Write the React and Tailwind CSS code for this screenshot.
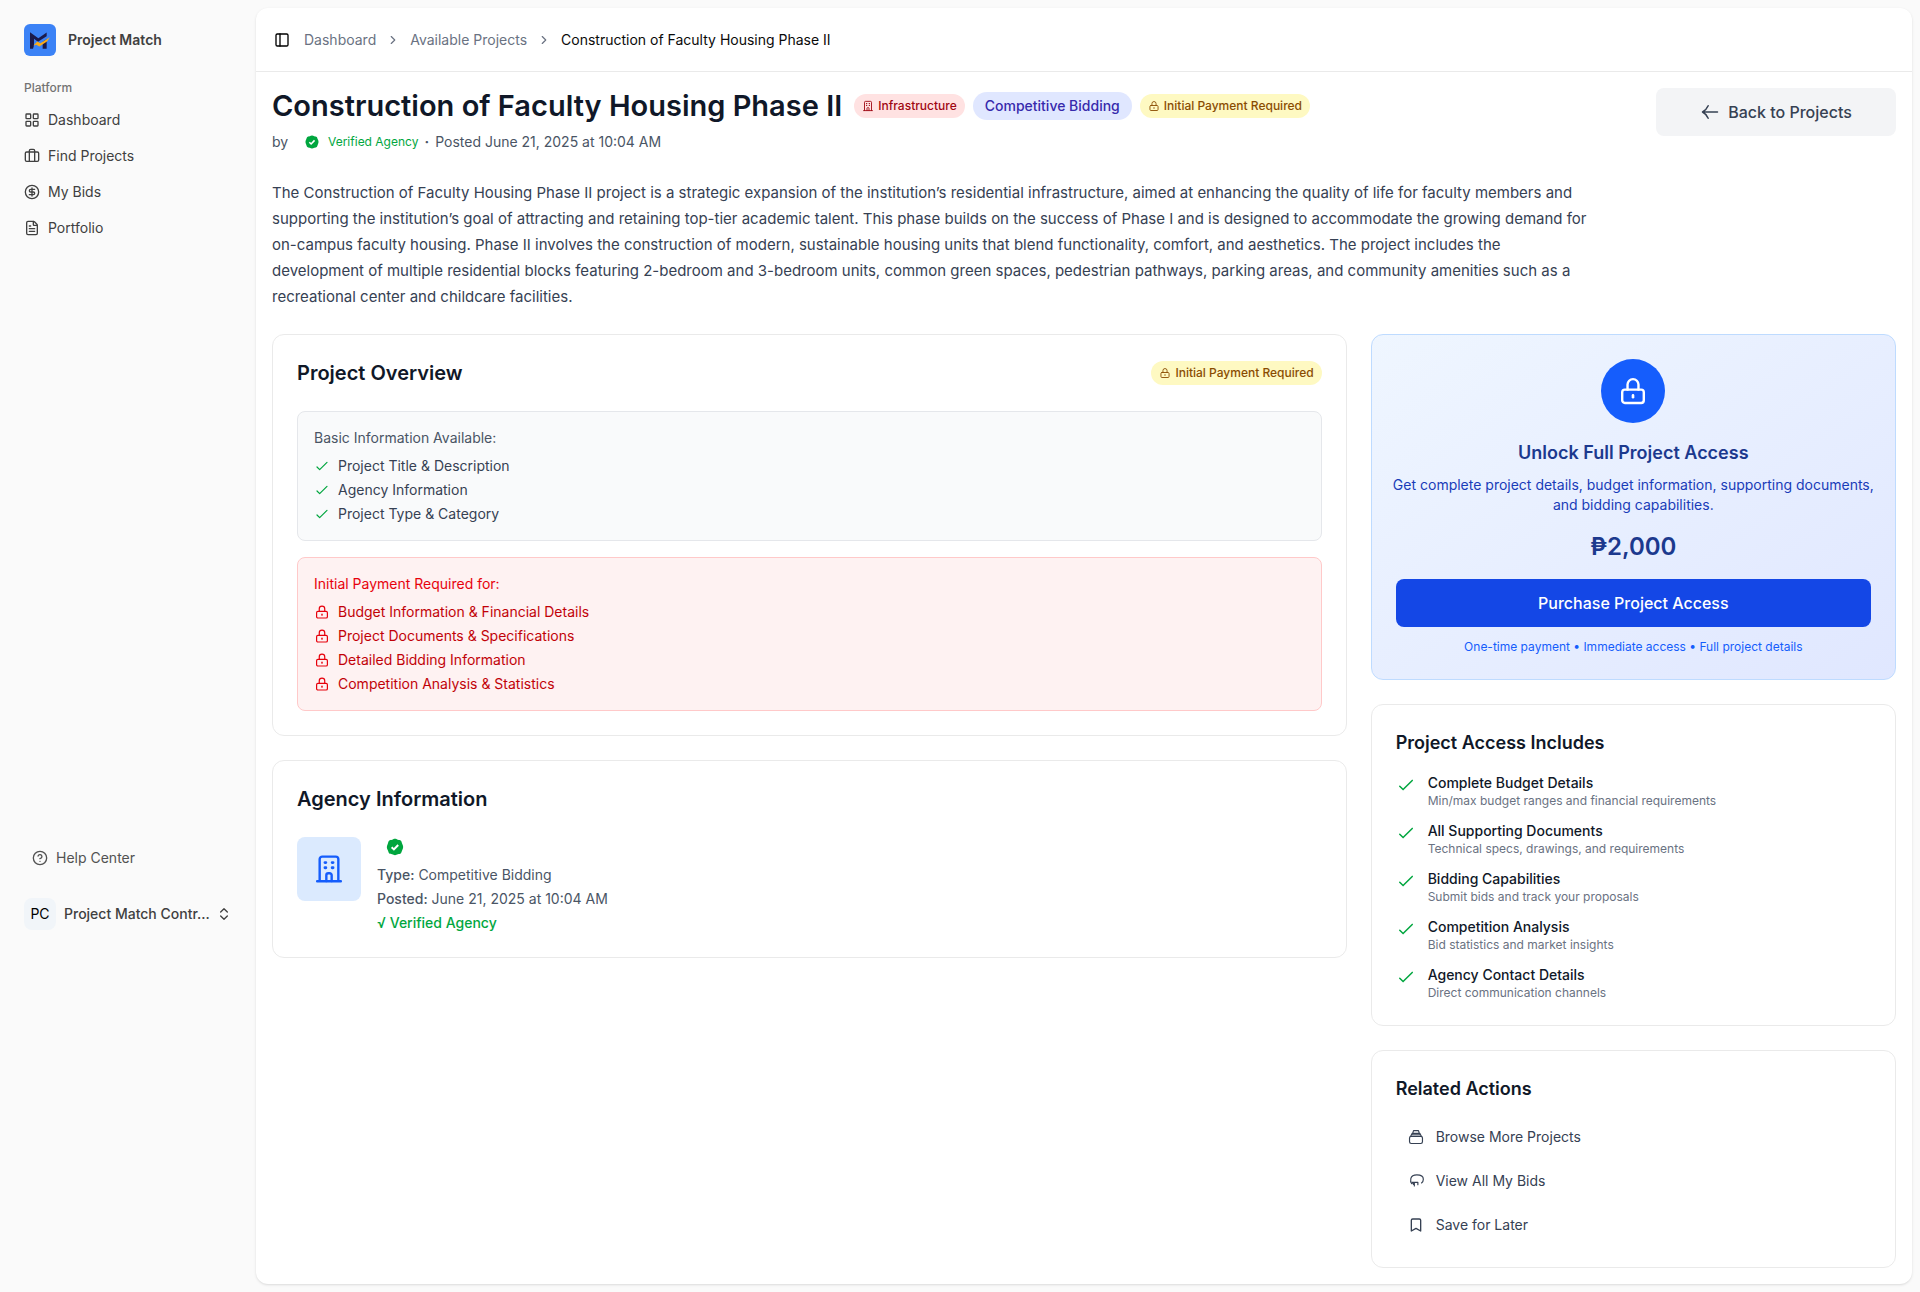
import React from "react";
import {
  LayoutGrid, Briefcase, CircleDollarSign, FileText, CircleHelp, ChevronsUpDown,
  PanelLeft, ChevronRight, Bookmark,
} from "lucide-react";

function Svg({ className, children, strokeWidth = 1.8 }) {
  return (
    <svg viewBox="0 0 24 24" fill="none" stroke="currentColor" strokeWidth={strokeWidth}
      strokeLinecap="round" strokeLinejoin="round" aria-hidden="true" className={className}>
      {children}
    </svg>
  );
}

const Lock = ({ className }) => (
  <Svg className={className}>
    <rect x="3.9" y="11" width="16.2" height="10" rx="2" />
    <path d="M7.9 11V7.2a4.1 4.1 0 0 1 8.2 0V11" />
    <path d="M12 15.300v1.400" strokeWidth="2" />
  </Svg>
);

const Building = ({ className }) => (
  <Svg className={className}>
    <path d="M3.100 21.200h17.800M5 21V4.700a2 2 0 0 1 2-2h10a2 2 0 0 1 2 2V21" />
    <path d="M10 21v-4.300a1.500 1.500 0 0 1 1.500-1.500h1a1.500 1.500 0 0 1 1.500 1.500V21" />
    <path d="M9 7.200h.6M14.400 7.200h.6M9 11h.6M14.400 11h.6" strokeWidth="2.200" />
  </Svg>
);

const Check = ({ className }) => (
  <Svg className={className}><path d="m4.500 13.500 4 4L19.500 6.500" /></Svg>
);

const Verified = ({ className }) => (
  <svg viewBox="-1 -1 22 22" aria-hidden="true" className={className}>
    <path fill="currentColor" d="M10 1c1.200 0 2 .7 3.200 1s2.500.3 3.300 1.100.8 2 1.400 3.200S19 8.800 19 10s-.6 2.400-1.100 3.700-.6 2.400-1.400 3.200-2.100.8-3.300 1.100-2 1-3.200 1-2-.7-3.200-1-2.500-.3-3.300-1.100-.8-2-1.400-3.200S1 11.200 1 10s.6-2.400 1.100-3.700.6-2.400 1.400-3.200 2.100-.8 3.300-1.100S8.800 1 10 1Z" />
    <path d="m6.300 10.300 2.500 2.400 4.700-4.900" fill="none" stroke="#fff" strokeWidth="2.200" />
  </svg>
);

const ArrowLeft = ({ className }) => (
  <Svg className={className}>
    <path d="M21 12H3.200M9.800 4.500C8.500 7.500 6 10.500 3 12c3 1.500 5.500 4.500 6.800 7.500" />
  </Svg>
);

const Stack = ({ className }) => (
  <Svg className={className} strokeWidth={1.75}>
    <rect x="2.300" y="11" width="19.400" height="10.800" rx="2.500" />
    <path d="M4 11 6.300 6.500h11.400L20 11M7 6.500l1.300-4h7.400l1.300 4M5.500 8.600h13" />
  </Svg>
);

const Cloud = ({ className }) => (
  <Svg className={className} strokeWidth={1.75}>
    <path d="M5.500 16C4 14.500 3.700 11 4.300 8.200 5.200 4.500 8 2.800 13.300 2.800S23 5 23 9.300c0 2.600-.8 4.200-2.700 5.700" />
    <path d="M6.500 14h8.300v3.500M9.500 14.500v5M6.500 14l1.800 3" />
  </Svg>
);

const Logo = () => (
  <span className="flex size-8 shrink-0 items-center justify-center rounded-md bg-[#3b82f6]">
    <svg viewBox="90 95 60 50" className="h-[17px] w-5" aria-hidden="true">
      <path fill="#1b1a4b" d="M90 95l25 18 25-17v11l-26 17-12-9v20l-3 10h-9zM128 124l12-8v29h-12z" />
      <path fill="#fbab18" d="M100 135l12-12 9 5 29-18-9 13-23 15-9-5z" />
    </svg>
  </span>
);

const nav = [
  [LayoutGrid, "Dashboard"],
  [Briefcase, "Find Projects"],
  [CircleDollarSign, "My Bids"],
  [FileText, "Portfolio"],
];

function Sidebar() {
  return (
    <aside className="flex w-64 shrink-0 flex-col px-4 pt-4 pb-[354px] text-sm text-neutral-700">
      <a href="#" className="flex h-12 items-center gap-3 px-2 font-semibold">
        <Logo />
        <span>Project Match</span>
      </a>
      <div className="mt-2 flex h-8 items-center px-2 text-xs font-medium text-neutral-500">Platform</div>
      <nav className="flex flex-col gap-1">
        {nav.map(([Icon, label]) => (
          <a key={label} href="#" className="flex h-8 items-center gap-2 px-2">
            <Icon className="size-4" />
            {label}
          </a>
        ))}
      </nav>
      <a href="#" className="mt-auto flex h-8 items-center gap-2 px-4 text-neutral-600">
        <CircleHelp className="size-4" />
        Help Center
      </a>
      <button type="button" className="mt-4 flex h-12 items-center justify-between px-2 text-left">
        <span className="flex items-center gap-2">
          <span className="flex size-8 shrink-0 items-center justify-center rounded-lg bg-slate-100 text-black">PC</span>
          <span className="whitespace-nowrap font-medium">Project Match Contr...</span>
        </span>
        <ChevronsUpDown className="size-4 shrink-0" />
      </button>
    </aside>
  );
}

function PaymentBadge() {
  return (
    <span className="inline-flex h-6 shrink-0 items-center gap-1 rounded-full bg-yellow-100 px-2 text-xs font-medium text-yellow-800">
      <Lock className="size-3" />
      Initial Payment Required
    </span>
  );
}

const card = "rounded-xl border border-neutral-200/80 p-6";

const includes = [
  ["Complete Budget Details", "Min/max budget ranges and financial requirements"],
  ["All Supporting Documents", "Technical specs, drawings, and requirements"],
  ["Bidding Capabilities", "Submit bids and track your proposals"],
  ["Competition Analysis", "Bid statistics and market insights"],
  ["Agency Contact Details", "Direct communication channels"],
];

export default function App() {
  return (
    <div className="flex min-h-screen bg-neutral-50 font-['Inter',sans-serif]">
      <Sidebar />
      <main className="my-2 mr-2 min-w-0 flex-1 rounded-xl bg-white shadow-sm">
        <header className="flex h-16 items-center gap-3 border-b border-neutral-200/80 px-4 text-sm">
          <button type="button" aria-label="Toggle sidebar" className="flex size-5 items-center justify-center">
            <PanelLeft className="size-4" />
          </button>
          <nav aria-label="Breadcrumb" className="flex items-center gap-2.5 text-gray-500">
            <a href="#">Dashboard</a>
            <ChevronRight className="size-3.5" />
            <a href="#">Available Projects</a>
            <ChevronRight className="size-3.5" />
            <span className="text-neutral-950">Construction of Faculty Housing Phase II</span>
          </nav>
        </header>

        <div className="flex flex-col gap-6 p-4">
          <section className="flex items-start gap-8">
            <div className="min-w-0 flex-1">
              <div className="flex items-center gap-3">
                <h1 className="text-[29px] leading-9 font-semibold text-gray-900">Construction of Faculty Housing Phase II</h1>
                <div className="flex items-center gap-2">
                  <span className="inline-flex h-6 items-center gap-1 rounded-full bg-red-100 px-2 text-xs font-medium text-red-800">
                    <Building className="size-3" />
                    Infrastructure
                  </span>
                  <span className="rounded-full bg-indigo-100 px-3 py-1 text-sm font-medium text-indigo-800">Competitive Bidding</span>
                  <PaymentBadge />
                </div>
              </div>
              <div className="mt-2 flex h-5 items-center text-sm text-gray-600">
                <span className="w-8">by</span>
                <Verified className="size-4 text-green-600" />
                <span className="ml-2 text-xs text-green-600">Verified Agency</span>
                <span className="mx-1.5 font-bold">·</span>
                <span>Posted June 21, 2025 at 10:04 AM</span>
              </div>
              <p className="mt-7 max-w-[1322px] text-[15px] leading-[26px] text-gray-700">
                The Construction of Faculty Housing Phase II project is a strategic expansion of the institution’s residential infrastructure, aimed at enhancing the quality of life for faculty members and supporting the institution’s goal of attracting and retaining top-tier academic talent. This phase builds on the success of Phase I and is designed to accommodate the growing demand for on-campus faculty housing. Phase II involves the construction of modern, sustainable housing units that blend functionality, comfort, and aesthetics. The project includes the development of multiple residential blocks featuring 2-bedroom and 3-bedroom units, common green spaces, pedestrian pathways, parking areas, and community amenities such as a recreational center and childcare facilities.
              </p>
            </div>
            <a href="#" className="flex h-12 w-60 shrink-0 items-center justify-center gap-2 rounded-lg bg-gray-100 font-medium text-gray-700">
              <ArrowLeft className="size-5" />
              Back to Projects
            </a>
          </section>

          <div className="grid grid-cols-3 items-start gap-6">
            <div className="col-span-2 flex flex-col gap-6">
              <section className={card}>
                <div className="mb-6 flex items-center justify-between">
                  <h2 className="text-xl font-semibold text-gray-900">Project Overview</h2>
                  <PaymentBadge />
                </div>
                <div className="rounded-lg border border-gray-200 bg-gray-50 p-4 text-sm text-gray-700">
                  <h3 className="mb-2 text-gray-600">Basic Information Available:</h3>
                  <ul className="flex flex-col gap-1">
                    {["Project Title & Description", "Agency Information", "Project Type & Category"].map((t) => (
                      <li key={t} className="flex items-center gap-2"><Check className="size-4 text-green-600" />{t}</li>
                    ))}
                  </ul>
                </div>
                <div className="mt-4 rounded-lg border border-red-200 bg-red-50 p-4 text-sm text-red-700">
                  <h3 className="mb-2 text-red-600">Initial Payment Required for:</h3>
                  <ul className="flex flex-col gap-1">
                    {["Budget Information & Financial Details", "Project Documents & Specifications", "Detailed Bidding Information", "Competition Analysis & Statistics"].map((t) => (
                      <li key={t} className="flex items-center gap-2"><Lock className="size-4 text-red-600" />{t}</li>
                    ))}
                  </ul>
                </div>
              </section>

              <section className={card}>
                <h2 className="mb-6 text-xl font-semibold text-gray-900">Agency Information</h2>
                <div className="flex items-start gap-4">
                  <span className="flex size-16 items-center justify-center rounded-lg bg-blue-100 text-blue-600">
                    <Building className="size-8" />
                  </span>
                  <div className="flex flex-col gap-1 text-sm text-gray-600">
                    <div className="mb-1 flex h-5 items-center pl-2">
                      <Verified className="size-5 text-green-600" />
                    </div>
                    <p><span className="font-medium">Type:</span> Competitive Bidding</p>
                    <p><span className="font-medium">Posted:</span> June 21, 2025 at 10:04 AM</p>
                    <p className="font-medium text-green-600">√ Verified Agency</p>
                  </div>
                </div>
              </section>
            </div>

            <div className="flex flex-col gap-6">
              <section className="flex flex-col items-center rounded-xl border border-blue-200 bg-linear-to-br from-blue-50 to-indigo-100 p-6 text-center">
                <span className="mb-4 flex size-16 items-center justify-center rounded-full bg-blue-600 text-white">
                  <Lock className="size-8" />
                </span>
                <h2 className="mb-2 text-lg font-semibold text-blue-900">Unlock Full Project Access</h2>
                <p className="-mx-3 mb-4 text-sm text-blue-800">Get complete project details, budget information, supporting documents, and bidding capabilities.</p>
                <p className="mb-4 text-2xl font-semibold text-blue-900">₱2,000</p>
                <button type="button" className="h-12 w-full rounded-lg bg-[#1447e6] font-medium text-white">Purchase Project Access</button>
                <p className="mt-3 text-xs text-blue-600">One-time payment • Immediate access • Full project details</p>
              </section>

              <section className={card}>
                <h2 className="mb-4 text-lg font-semibold text-gray-900">Project Access Includes</h2>
                <ul className="flex flex-col gap-3">
                  {includes.map(([t, d]) => (
                    <li key={t} className="flex items-start gap-3">
                      <Check className="mt-0.5 size-5 text-green-600" />
                      <div>
                        <p className="text-sm font-medium text-gray-900">{t}</p>
                        <p className="text-xs text-gray-500">{d}</p>
                      </div>
                    </li>
                  ))}
                </ul>
              </section>

              <section className={card}>
                <h2 className="mb-4 text-lg font-semibold text-gray-900">Related Actions</h2>
                <div className="flex flex-col gap-2 text-sm text-gray-700">
                  {[[Stack, "Browse More Projects"], [Cloud, "View All My Bids"], [Bookmark, "Save for Later"]].map(([Icon, t]) => (
                    <button key={t} type="button" className="flex h-9 items-center gap-3 px-3 text-left">
                      <Icon className="size-4" />
                      {t}
                    </button>
                  ))}
                </div>
              </section>
            </div>
          </div>
        </div>
      </main>
    </div>
  );
}
